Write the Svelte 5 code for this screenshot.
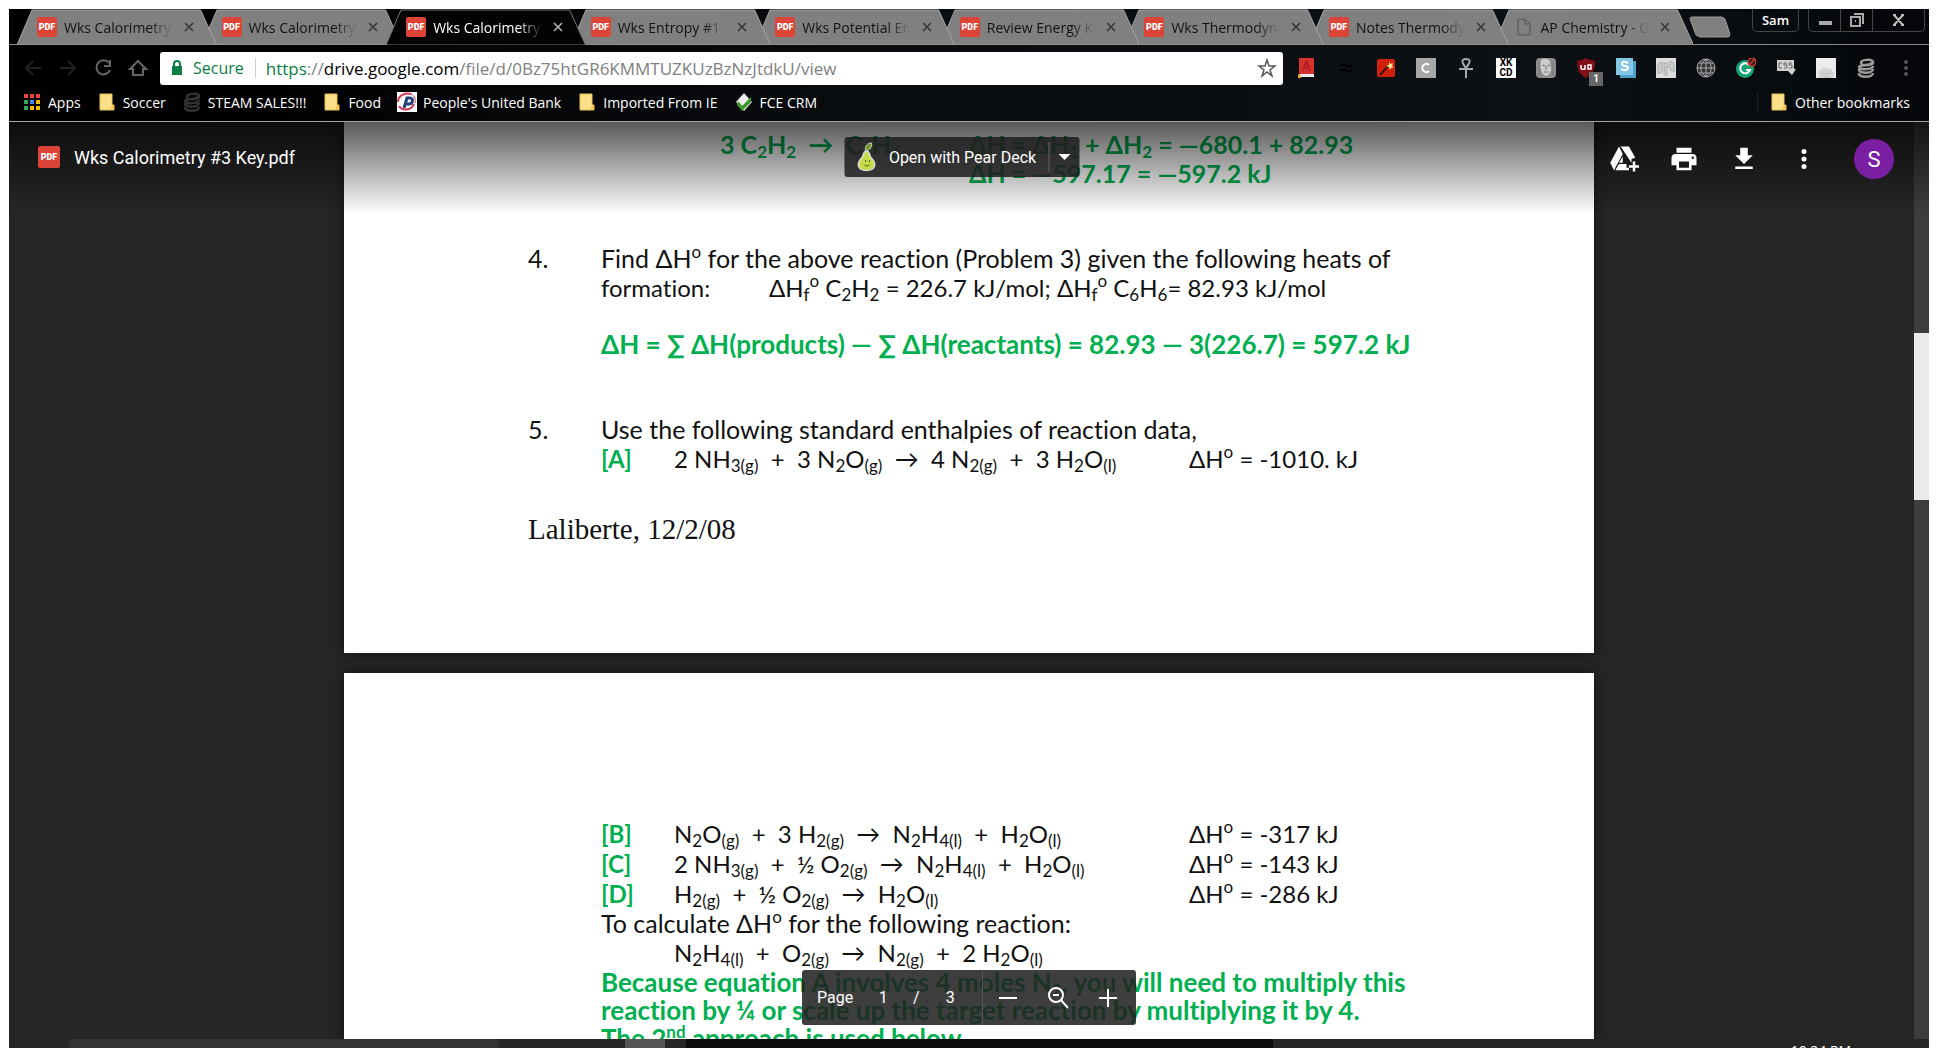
<script>
  const tabs = [
    { title: 'Wks Calorimetry #1', icon: 'pdf' },
    { title: 'Wks Calorimetry #2', icon: 'pdf' },
    { title: 'Wks Calorimetry #3', icon: 'pdf', active: true },
    { title: 'Wks Entropy #1 K', icon: 'pdf' },
    { title: 'Wks Potential Energy', icon: 'pdf' },
    { title: 'Review Energy Key', icon: 'pdf' },
    { title: 'Wks Thermodynamics', icon: 'pdf' },
    { title: 'Notes Thermodynamics', icon: 'pdf' },
    { title: 'AP Chemistry - Goo', icon: 'file' },
  ];

  const bookmarks = [
    { title: 'Apps', icon: 'apps' },
    { title: 'Soccer', icon: 'folder' },
    { title: 'STEAM SALES!!!', icon: 'coil' },
    { title: 'Food', icon: 'folder' },
    { title: "People's United Bank", icon: 'bank' },
    { title: 'Imported From IE', icon: 'folder' },
    { title: 'FCE CRM', icon: 'check' },
  ];

  const extensions = [
    'book', 'wave', 'wand', 'cbox', 'ankh', 'xkcd', 'face', 'shield',
    'sbox', 'panels', 'globe', 'gcheck', 'css', 'bald', 'coilgray',
  ];

  const appColors = ['#f44336', '#f44336', '#f44336', '#34a853', '#4285f4', '#fbbc05', '#34a853', '#fbbc05', '#fbbc05'];

  // "_2" is a subscript, "^o" a superscript; braces group longer ones
  function parse(text) {
    return [...text.matchAll(/([_^])(?:\{([^}]*)\}|(.))|[^_^]+/g)].map((m) => ({
      kind: m[1] === '_' ? 'sub' : m[1] === '^' ? 'sup' : 'text',
      text: m[1] ? m[2] ?? m[3] : m[0],
    }));
  }

  const reactions = [
    { key: '[B]', eq: 'N_2O_{(g)}  +  3 H_{2(g)}  →  N_2H_{4(l)}  +  H_2O_{(l)}', dh: 'ΔH^o = -317 kJ' },
    { key: '[C]', eq: '2 NH_{3(g)}  +  ½ O_{2(g)}  →  N_2H_{4(l)}  +  H_2O_{(l)}', dh: 'ΔH^o = -143 kJ' },
    { key: '[D]', eq: 'H_{2(g)}  +  ½ O_{2(g)}  →  H_2O_{(l)}', dh: 'ΔH^o = -286 kJ' },
  ];

  let url = $state('https://drive.google.com/file/d/0Bz75htGR6KMMTUZKUzBzNzJtdkU/view');
  let page = $state('1');
</script>

{#snippet chem(text)}{#each parse(text) as part}{#if part.kind === 'sub'}<sub>{part.text}</sub>{:else if part.kind === 'sup'}<sup>{part.text}</sup>{:else}{part.text}{/if}{/each}{/snippet}

{#snippet pdf()}
  <span class="pdf">PDF</span>
{/snippet}

{#snippet coil(color)}
  <svg viewBox="0 0 20 20" fill="none" stroke={color} stroke-width="2.5">
    <path d="M16 5c-3 2-11 3-11 0 0-4 11-4 12-1 1 5-14 2-14 5 0 3 14 3 14-1M3 11c-1 5 14 5 14 0M3 15c-1 5 14 5 14 0" />
  </svg>
{/snippet}

{#snippet bookmarkIcon(name)}
  {#if name === 'apps'}
    <svg viewBox="0 0 20 20">
      {#each appColors as color, i}
        <rect x={2 + (i % 3) * 6} y={2 + Math.floor(i / 3) * 6} width="4" height="4" fill={color} />
      {/each}
    </svg>
  {:else if name === 'folder'}
    <svg viewBox="0 0 20 20">
      <path d="M3 2h12v11h2v5H3z" fill="#ffe08a" stroke="#e8bf52" />
      <path d="M15 13l-2 5h4v-5z" fill="#f5c64d" />
    </svg>
  {:else if name === 'coil'}
    {@render coil('#333')}
  {:else if name === 'bank'}
    <svg viewBox="0 0 20 20">
      <rect width="20" height="20" fill="#fff" />
      <path d="M14 2C6 0 1 5 1 10M2 14c3 5 12 5 15-2" fill="none" stroke="#d23b55" stroke-width="2" />
      <path d="M7 16l3-10h3c4 0 3 6-1 6H9" fill="none" stroke="#23417c" stroke-width="3" />
      <path d="M14 2c4 2 5 6 4 9" fill="none" stroke="#d23b55" />
    </svg>
  {:else}
    <svg viewBox="0 0 20 20">
      <path d="M10 1l8 9-8 9-8-9z" fill="#eee" />
      <path d="M4 9l4 5 9-9v5l-9 9-5-6z" fill="#3a9426" />
    </svg>
  {/if}
{/snippet}

{#snippet extensionIcon(name)}
  {#if name === 'book'}
    <svg viewBox="0 0 20 20">
      <path d="M3 0h15v16H3z" fill="#d6322d" />
      <path d="M3 16h15v3H5z" fill="#eee" />
      <path d="M7 13l3-9h1l3 9M8 10h5" fill="none" stroke="#b52020" stroke-width="2" />
      <path d="M2 16l3 2v2H2z" fill="#f2b32a" />
    </svg>
  {:else if name === 'wave'}
    <svg viewBox="0 0 20 20" fill="none" stroke="#000" stroke-width="2">
      <path d="M4 8c4-4 8 3 12-1M4 13c4-4 8 3 12-1" />
    </svg>
  {:else if name === 'wand'}
    <svg viewBox="0 0 20 20">
      <rect x="1" y="1" width="18" height="18" rx="2" fill="#d3200c" />
      <path d="M4 17l8-9" stroke="#401008" stroke-width="2" />
      <path d="M13 3l1 3 3-1-1 3 2 1-3 1-1 2-1-3-3-1 3-1z" fill="#ffe98a" />
    </svg>
  {:else if name === 'cbox'}
    <svg viewBox="0 0 20 20">
      <rect width="20" height="20" fill="#a7a7a7" />
      <path d="M13 7a4 4 0 1 0 0 6" fill="none" stroke="#fff" stroke-width="2" />
    </svg>
  {:else if name === 'ankh'}
    <svg viewBox="0 0 20 20" fill="none" stroke="#aaa" stroke-width="2">
      <path d="M10 20V10M3 11h14M10 10C3 1 8 1 10 1s7 0 0 9z" />
    </svg>
  {:else if name === 'xkcd'}
    <span class="xkcd">XK<br />CD</span>
  {:else if name === 'face'}
    <svg viewBox="0 0 20 20">
      <rect width="20" height="20" rx="4" fill="#8d8d8d" />
      <path d="M5 2q5-3 9 1l1 9q-3 8-7 5-5-5-3-15z" fill="#ccc" />
      <path d="M3 3v14M17 4v13" stroke="#777" />
      <path d="M6 7l3 1M11 8l3-1M8 14h4M10 8v4" stroke="#777" fill="none" />
    </svg>
  {:else if name === 'shield'}
    <svg viewBox="0 0 20 20">
      <path d="M10 0c3 2 6 2 9 3 0 8-2 13-9 17C3 16 1 11 1 3c3-1 6-1 9-3z" fill="#800f18" />
      <path d="M5 7v3q0 2 4 1V7M12 7h3v4h-3z" fill="none" stroke="#fff" stroke-width="1.5" />
    </svg>
    <span class="badge">1</span>
  {:else if name === 'sbox'}
    <svg viewBox="0 0 20 20">
      <path d="M3 3h17v17H4z" fill="#4f9fc9" />
      <rect width="17" height="17" fill="#83c6e6" />
      <path d="M12 5q-6-3-6 1c0 3 6 1 6 4q-1 4-7 1" fill="none" stroke="#fff" stroke-width="2" />
    </svg>
  {:else if name === 'panels'}
    <svg viewBox="0 0 20 20">
      <rect width="20" height="20" fill="#ddd" />
      <path d="M2 6l4-2v10l-4 2zM8 5h4v5H8zM14 3l4 2v9l-4-2zM8 12h3v5H8z" fill="#ccc" stroke="#aaa" />
    </svg>
  {:else if name === 'globe'}
    <svg viewBox="0 0 20 20">
      <circle cx="10" cy="10" r="9" fill="#333" stroke="#aaa" />
      <path d="M10 1v18M1 10h18M3 5h14M3 15h14M10 1c-7 5-7 13 0 18M10 1c7 5 7 13 0 18" fill="none" stroke="#aaa" />
    </svg>
  {:else if name === 'gcheck'}
    <svg viewBox="0 0 20 20">
      <circle cx="9" cy="11" r="9" fill="#14a574" />
      <path d="M13 7a5 5 0 1 0 1 5h-4" fill="none" stroke="#fff" stroke-width="2" />
      <circle cx="16" cy="4" r="4" fill="#222" stroke="#e0352b" stroke-width="1.5" />
      <path d="M13 7l6-6" stroke="#e0352b" stroke-width="1.5" />
    </svg>
  {:else if name === 'css'}
    <svg viewBox="0 0 20 20">
      <path d="M1 2h17v9h2l-4 6-4-4H1z" fill="#d2d2d2" />
      <path d="M6 5H3v5h3M11 5H8v2h3v3H8M16 5h-3v2h3v3h-3" fill="none" stroke="#666" />
    </svg>
  {:else if name === 'bald'}
    <svg viewBox="0 0 20 20">
      <rect width="20" height="20" fill="#ececec" />
      <path d="M3 20c-2-7 1-10 7-10s9 3 7 10z" fill="#d3d3d3" />
      <path d="M5 15l4 1M11 16l4-1M8 19h5" stroke="#bbb" />
    </svg>
  {:else}
    {@render coil('#9a9a9a')}
  {/if}
{/snippet}

<div class="window">
  <header class="chrome">
    <div class="tab-row">
      <div class="tabs">
        {#each tabs as tab, i}
          <div class="tab" class:active={tab.active} style="z-index: {tab.active ? 20 : 10 - i}">
            <svg class="tab-shape" viewBox="0 0 200 36" preserveAspectRatio="none">
              <path d="M0 36L15 1h169l16 35z" />
            </svg>
            {#if tab.icon === 'pdf'}
              {@render pdf()}
            {:else}
              <svg class="file" viewBox="0 0 20 20" fill="none" stroke="#555">
                <path d="M4 2h7l5 5v11H4zM11 2v5h5" />
              </svg>
            {/if}
            <span class="tab-title">{tab.title}</span>
            <button class="tab-close" aria-label="Close tab">
              <svg viewBox="0 0 10 10" fill="none" stroke="currentColor" stroke-width="1.5"><path d="M1 1l8 8M9 1l-8 8" /></svg>
            </button>
          </div>
        {/each}
      </div>
      <button class="new-tab" aria-label="New tab">
        <svg viewBox="0 0 42 22"><path d="M1 3q0-2 2-2h30l3 2 5 15q0 3-2 3H11L7 19z" fill="#808080" stroke="#999" /></svg>
      </button>
      <div class="window-tools">
        <button class="profile">Sam</button>
        <div class="window-buttons">
          <button aria-label="Minimize"><svg viewBox="0 0 16 16"><path d="M2 9h13v4H2z" fill="#aaa" /></svg></button>
          <button aria-label="Restore"><svg viewBox="0 0 16 16" fill="none" stroke="#aaa" stroke-width="2"><path d="M2 5h9v9H2zM5 2h9v10M6 9h1" /></svg></button>
          <button aria-label="Close"><svg viewBox="0 0 16 16" fill="none" stroke="#bbb" stroke-width="2"><path d="M3 3l9 10M12 3L3 13M2 3h3M10 3h3M2 13h3M10 13h3" /></svg></button>
        </div>
      </div>
    </div>

    <div class="toolbar">
      <nav class="nav">
        <button aria-label="Back"><svg viewBox="0 0 20 20" stroke="#222"><path d="M18 10H3M10 3l-7 7 7 7" /></svg></button>
        <button aria-label="Forward"><svg viewBox="0 0 20 20" stroke="#222"><path d="M2 10h15M10 3l7 7-7 7" /></svg></button>
        <button aria-label="Reload"><svg viewBox="0 0 20 20" stroke="#666"><path d="M16 5a7 7 0 1 0 1 7M17 2v6h-6" /></svg></button>
        <button aria-label="Home"><svg viewBox="0 0 20 20" stroke="#666"><path d="M2 11l8-8 8 8h-3v6H5v-6z" /></svg></button>
      </nav>
      <label class="omnibox">
        <svg class="lock" viewBox="0 0 12 16"><path d="M1 6h10v9H1z" fill="#0b8043" /><path d="M3 7V4q0-3 3-3t3 3v3" fill="none" stroke="#0b8043" stroke-width="2" /></svg>
        <span class="secure">Secure</span>
        <span class="url">
          <span class="url-text" aria-hidden="true"><b>https</b>://<i>drive.google.com</i>/file/d/0Bz75htGR6KMMTUZKUzBzNzJtdkU/view</span>
          <input type="text" aria-label="Address" bind:value={url} />
        </span>
        <svg class="star" viewBox="0 0 20 20" fill="none" stroke="#555" stroke-width="1.5"><path d="M10 2l2 6h6l-5 4 2 6-5-4-5 4 2-6-5-4h6z" /></svg>
      </label>
      <div class="extensions">
        {#each extensions as name}
          <button class="extension" aria-label={name}>{@render extensionIcon(name)}</button>
        {/each}
        <button class="extension" aria-label="Menu">
          <svg viewBox="0 0 20 20" fill="#555"><circle cx="10" cy="4" r="2" /><circle cx="10" cy="10" r="2" /><circle cx="10" cy="16" r="2" /></svg>
        </button>
      </div>
    </div>

    <div class="bookmarks">
      {#each bookmarks as mark}
        <a href="#{mark.icon}" class="bookmark">{@render bookmarkIcon(mark.icon)}{mark.title}</a>
      {/each}
      <a href="#other" class="bookmark other">{@render bookmarkIcon('folder')}Other bookmarks</a>
    </div>
  </header>

  <main class="viewer">
    <div class="pages">
      <article class="sheet first">
        <div class="top-line green">
          <span>{@render chem('3 C_2H_2  →  C_6H_6')}</span>
          <span>{@render chem('ΔH = ΔH_1 + ΔH_2 = —680.1 + 82.93')}<br />ΔH = —597.17 = —597.2 kJ</span>
        </div>
        <section class="problem">
          <span>4.</span>
          <div>
            <p>{@render chem('Find ΔH^o for the above reaction (Problem 3) given the following heats of')}</p>
            <p class="given"><span>formation:</span><span>{@render chem('ΔH_f^o C_2H_2 = 226.7 kJ/mol; ΔH_f^o C_6H_6= 82.93 kJ/mol')}</span></p>
            <p class="answer green">ΔH = ∑ ΔH(products) — ∑ ΔH(reactants) = 82.93 — 3(226.7) = 597.2 kJ</p>
          </div>
        </section>
        <section class="problem">
          <span>5.</span>
          <div>
            <p>Use the following standard enthalpies of reaction data,</p>
            <p class="reaction">
              <span class="green">[A]</span>
              <span>{@render chem('2 NH_{3(g)}  +  3 N_2O_{(g)}  →  4 N_{2(g)}  +  3 H_2O_{(l)}')}</span>
              <span>{@render chem('ΔH^o = -1010. kJ')}</span>
            </p>
          </div>
        </section>
        <footer class="author">Laliberte, 12/2/08</footer>
      </article>

      <article class="sheet second">
        {#each reactions as r}
          <p class="reaction tall">
            <span class="green">{r.key}</span>
            <span>{@render chem(r.eq)}</span>
            <span>{@render chem(r.dh)}</span>
          </p>
        {/each}
        <p>{@render chem('To calculate ΔH^o for the following reaction:')}</p>
        <p class="reaction tall">
          <span></span>
          <span>{@render chem('N_2H_{4(l)}  +  O_{2(g)}  →  N_{2(g)}  +  2 H_2O_{(l)}')}</span>
        </p>
        <div class="note green">
          <p>{@render chem('Because equation A involves 4 moles N_2, you will need to multiply this')}</p>
          <p>reaction by ¼ or scale up the target reaction by multiplying it by 4.</p>
          <p>{@render chem('The 2^{nd} approach is used below.')}</p>
        </div>
      </article>
    </div>

    <div class="scrollbar"><div class="thumb"></div></div>

    <div class="viewer-bar">
      <div class="doc-name">{@render pdf()}<span>Wks Calorimetry #3 Key.pdf</span></div>
      <div class="actions">
        <button aria-label="Add to My Drive">
          <svg viewBox="0 0 24 24"><path d="M8 2L1 15l3 6 7-13zM9 2h7l5 9-3 1v3L10 3zM11 10l-3 5h3zM8 16h6v3h2v2H5z" /><path d="M19 14h2v3h3v2h-3v3h-2v-3h-3v-2h3z" /></svg>
        </button>
        <button aria-label="Print">
          <svg viewBox="0 0 24 24"><path d="M19 8H5c-1.700 0-3 1.300-3 3v6h4v4h12v-4h4v-6c0-1.700-1.300-3-3-3zm-3 11H8v-5h8v5zm3-7a1 1 0 1 1 0-2 1 1 0 0 1 0 2zM18 3H6v4h12z" /></svg>
        </button>
        <button aria-label="Download">
          <svg viewBox="0 0 24 24"><path d="M19 9h-4V3H9v6H5l7 7zM5 18v2h14v-2z" /></svg>
        </button>
        <button aria-label="More actions">
          <svg viewBox="0 0 24 24"><circle cx="12" cy="6" r="2" /><circle cx="12" cy="12" r="2" /><circle cx="12" cy="18" r="2" /></svg>
        </button>
        <button class="avatar">S</button>
      </div>
    </div>

    <div class="open-with">
      <button class="open-main">
        <svg viewBox="0 0 20 30">
          <path d="M10 9c3 0 3 3 4 6 3 3 5 6 4 9-1 6-15 6-16 0-1-3 1-6 4-9 1-3 1-6 4-6z" fill="#c5d94a" stroke="#ddd" stroke-width="1.500" />
          <path d="M9 9c-1-5 2-8 6-8 1 5-2 7-6 8z" fill="#6f9a2c" stroke="#ccc" />
          <path d="M9 18v2M13 18v2M8 23q3 2 5 0" stroke="#556b1c" fill="none" />
        </svg>
        Open with Pear Deck
      </button>
      <button class="open-more" aria-label="More apps">
        <svg viewBox="0 0 12 6"><path d="M0 0h12L6 6z" fill="#fff" /></svg>
      </button>
    </div>

    <div class="pager">
      <label class="page-label">Page <input type="text" bind:value={page} /></label>
      <span>/</span>
      <span class="total">3</span>
      <div class="zoom">
        <button aria-label="Zoom out"><svg viewBox="0 0 24 24"><path d="M3 11h18v2H3z" fill="#fff" /></svg></button>
        <button aria-label="Fit to width"><svg viewBox="0 0 24 24" fill="none" stroke="#fff" stroke-width="2"><circle cx="10" cy="9" r="7" /><path d="M15 14l7 8M7 9h6" /></svg></button>
        <button aria-label="Zoom in"><svg viewBox="0 0 24 24"><path d="M11 3h2v8h8v2h-8v8h-2v-8H3v-2h8z" fill="#fff" /></svg></button>
      </div>
    </div>
  </main>

  <footer class="taskbar">
    <div class="search"></div>
    <div class="running"></div>
    <div class="wallpaper"></div>
    <span class="clock">10:24 PM</span>
  </footer>
</div>

<style>
  :global(body) {
    background: #fff;
  }

  :global(#app) {
    height: 100vh;
    overflow: hidden;
  }

  * {
    box-sizing: border-box;
  }

  button {
    display: flex;
    align-items: center;
    justify-content: center;
    padding: 0;
    border: 0;
    background: none;
    color: inherit;
    font: inherit;
  }

  p {
    margin: 0;
  }

  .window {
    display: flex;
    flex-direction: column;
    height: 100vh;
    padding: 9px 9px 0;
    font-family: "Open Sans", "Noto Sans", sans-serif;
    font-size: 14px;
  }

  /* browser chrome */
  .chrome {
    flex: none;
    background: linear-gradient(90deg, #000 10%, #090c10 45%, #0c1116 80%, #05070a);
    border-bottom: 1px solid #a5a5a5;
    color: #fff;
  }

  .tab-row {
    display: flex;
    height: 36px;
    border-bottom: 1px solid #8b8b8b;
    padding-left: 8px;
  }

  .tabs {
    display: flex;
    flex: 0 1 1661px;
    min-width: 0;
  }

  .tab {
    position: relative;
    display: flex;
    align-items: center;
    flex: 1 1 0;
    min-width: 0;
    height: 36px;
    margin-right: -15px;
    padding: 0 18px 0 20px;
    color: #111;
  }

  .tab-shape {
    position: absolute;
    inset: 0;
    width: 100%;
    height: 100%;
    fill: #808080;
    stroke: #a5a5a5;
  }

  .tab.active {
    color: #fff;
  }

  .tab.active .tab-shape {
    fill: #020304;
    stroke: #777;
  }

  .pdf {
    position: relative;
    display: flex;
    flex: none;
    align-items: center;
    justify-content: center;
    width: 20px;
    height: 20px;
    border-radius: 2px;
    background: #db4437;
    color: #fff;
    font: 900 9px Roboto, sans-serif;
  }

  .file {
    position: relative;
    flex: none;
    width: 20px;
    height: 20px;
  }

  .tab-title {
    position: relative;
    flex: 1;
    min-width: 0;
    margin-left: 7px;
    overflow: hidden;
    white-space: nowrap;
    mask-image: linear-gradient(90deg, #000 78%, transparent);
  }

  .tab-close {
    position: relative;
    width: 20px;
    height: 20px;
    margin-left: 6px;
    color: #333;
  }

  .active .tab-close {
    color: #bbb;
  }

  .tab-close svg {
    width: 10px;
    height: 10px;
  }

  .new-tab {
    flex: none;
    align-self: center;
    width: 42px;
    margin-left: 11px;
  }

  .new-tab svg {
    width: 42px;
    height: 22px;
  }

  .window-tools {
    display: flex;
    gap: 9px;
    height: 23px;
    margin-left: auto;
    padding-right: 4px;
  }

  .profile,
  .window-buttons {
    border: 1px solid #444;
    border-top: 0;
    border-radius: 0 0 5px 5px;
  }

  .profile {
    width: 47px;
    font-size: 13px;
    font-weight: 600;
  }

  .window-buttons {
    display: flex;
  }

  .window-buttons button {
    width: 32px;
    border-right: 1px solid #444;
  }

  .window-buttons button:last-child {
    width: 51px;
    border-right: 0;
  }

  .window-buttons svg {
    width: 16px;
    height: 16px;
  }

  .toolbar {
    display: flex;
    align-items: center;
    height: 46px;
    padding: 0 3px 0 6px;
  }

  .nav {
    display: flex;
    flex: none;
  }

  .nav button {
    width: 35px;
    height: 34px;
  }

  .nav svg {
    width: 20px;
    height: 20px;
    fill: none;
    stroke-width: 2;
  }

  .omnibox {
    display: flex;
    flex: 1;
    align-items: center;
    min-width: 0;
    height: 33px;
    margin-left: 5px;
    padding: 0 6px 0 11px;
    border-radius: 3px;
    background: #fff;
    color: #808080;
    font-size: 16px;
  }

  .lock {
    width: 12px;
    height: 16px;
  }

  .secure {
    margin-left: 10px;
    padding-right: 11px;
    border-right: 1px solid #ccc;
    color: #0b8043;
    line-height: 20px;
  }

  .url {
    position: relative;
    flex: 1;
    min-width: 0;
    margin-left: 10px;
    font-size: 17px;
    white-space: nowrap;
  }

  .url b {
    color: #0b8043;
    font-weight: 400;
  }

  .url i {
    color: #000;
    font-style: normal;
  }

  /* the coloured text lies under a clear input */
  .url input {
    position: absolute;
    inset: 0;
    width: 100%;
    padding: 0;
    border: 0;
    background: none;
    color: transparent;
    font: inherit;
  }

  .star {
    width: 20px;
    height: 20px;
  }

  .extensions {
    display: flex;
    flex: none;
    margin-left: 3px;
  }

  .extension {
    position: relative;
    width: 40px;
    height: 34px;
  }

  .extension svg {
    width: 20px;
    height: 20px;
  }

  .xkcd {
    width: 20px;
    height: 20px;
    background: #fff;
    color: #000;
    font: 700 10px/10px Roboto, sans-serif;
  }

  .badge {
    position: absolute;
    right: 3px;
    bottom: -1px;
    width: 14px;
    height: 14px;
    background: #666;
    font: 700 10px/14px Roboto, sans-serif;
  }

  .bookmarks {
    display: flex;
    align-items: center;
    gap: 16px;
    height: 30px;
    padding: 0 19px 8px 13px;
  }

  .bookmark {
    display: flex;
    align-items: center;
    gap: 6px;
    color: #fff;
    text-decoration: none;
    white-space: nowrap;
  }

  .bookmark svg {
    width: 20px;
    height: 20px;
  }

  .other {
    margin-left: auto;
    padding-left: 11px;
    border-left: 1px solid #222;
  }

  /* document */
  .viewer {
    position: relative;
    display: flex;
    flex: 1;
    min-height: 0;
    overflow: hidden;
    background: #262626;
  }

  .pages {
    display: flex;
    flex: 1;
    flex-direction: column;
    align-items: center;
    gap: 20px;
    overflow: hidden;
  }

  .sheet {
    flex: none;
    width: 1250px;
    max-width: 100%;
    margin-left: 15px;
    background: #fff;
    box-shadow: 0 0 12px #111;
    color: #111;
    font-family: Lato, "Noto Sans", sans-serif;
    font-size: 25px;
    font-variant-ligatures: none;
    line-height: 29px;
  }

  .first {
    display: flex;
    flex-direction: column;
    padding: 8px 184px 109px;
  }

  .second {
    padding: 146px 100px 60px 257px;
  }

  .sheet sub,
  .sheet sup {
    font-size: 17px;
    line-height: 0;
  }

  .sheet sub {
    vertical-align: -4px;
  }

  .sheet sup {
    vertical-align: 10px;
  }

  .green {
    color: #00b050;
    font-weight: 700;
  }

  .top-line {
    display: grid;
    grid-template-columns: 249px 1fr;
    padding-left: 192px;
    white-space: pre;
  }

  .problem {
    display: grid;
    grid-template-columns: 73px 1fr;
    margin-top: 56px;
    white-space: nowrap;
  }

  .given {
    display: grid;
    grid-template-columns: 168px 1fr;
    font-size: 24px;
  }

  .answer {
    margin-top: 28px;
  }

  .answer,
  .note {
    font-size: 26px;
  }

  .note {
    line-height: 28px;
    white-space: nowrap;
  }

  .reaction {
    display: grid;
    grid-template-columns: 73px 515px 1fr;
    font-size: 24px;
    white-space: pre;
  }

  .tall {
    line-height: 30px;
  }

  .author {
    margin-top: 42px;
    font-family: "Liberation Serif", serif;
    font-size: 29px;
  }

  .scrollbar {
    flex: none;
    width: 15px;
    padding-top: 211px;
    background: #3d3d3d;
  }

  .thumb {
    height: 167px;
    background: #eaeaea;
  }

  .viewer-bar {
    position: absolute;
    inset: 0 0 auto;
    display: flex;
    justify-content: space-between;
    height: 92px;
    padding: 17px 35px 0 29px;
    background: linear-gradient(rgba(0, 0, 0, 0.65), transparent);
    color: #fff;
    font-family: Roboto, sans-serif;
    font-size: 18px;
  }

  .doc-name,
  .actions {
    display: flex;
    align-items: center;
    height: 40px;
  }

  .doc-name {
    gap: 14px;
    height: 36px;
  }

  .doc-name .pdf {
    width: 22px;
    height: 22px;
  }

  .actions button {
    width: 60px;
    height: 40px;
  }

  .actions svg {
    width: 30px;
    height: 30px;
    fill: #fff;
  }

  .actions .avatar {
    width: 40px;
    margin-left: 20px;
    border-radius: 50%;
    background: #7b1fa2;
    font-size: 22px;
  }

  .open-with,
  .pager {
    position: absolute;
    left: 50%;
    display: flex;
    align-items: center;
    transform: translateX(-50%);
    border-radius: 3px;
    color: #fff;
    font-family: Roboto, sans-serif;
    font-size: 16px;
    white-space: nowrap;
  }

  .open-with {
    top: 15px;
    width: 235px;
    height: 40px;
    margin-left: -7px;
    background: rgba(30, 30, 30, 0.86);
  }

  .open-main {
    flex: 1;
    gap: 12px;
    height: 30px;
    border-right: 1px solid #666;
  }

  .open-main svg {
    width: 20px;
    height: 30px;
  }

  .open-more {
    width: 30px;
  }

  .open-more svg {
    width: 12px;
    height: 6px;
  }

  .pager {
    bottom: 14px;
    width: 334px;
    height: 55px;
    padding-left: 15px;
    background: rgba(30, 30, 30, 0.86);
  }

  .page-label {
    display: flex;
    align-items: center;
    gap: 14px;
  }

  .page-label input {
    width: 32px;
    padding: 0;
    border: 0;
    background: none;
    color: #fff;
    font: inherit;
    text-align: center;
  }

  .pager > span {
    width: 34px;
    text-align: center;
  }

  .zoom {
    display: flex;
    flex: none;
    align-items: center;
    width: 154px;
    height: 55px;
    margin-left: auto;
    border-left: 1px solid #555;
  }

  .zoom button {
    width: 50px;
    height: 50px;
  }

  .zoom svg {
    width: 24px;
    height: 24px;
  }

  /* desktop taskbar */
  .taskbar {
    display: flex;
    flex: none;
    height: 9px;
    overflow: hidden;
    padding-left: 60px;
    background: #262626;
    color: #fff;
  }

  .search {
    width: 430px;
    background: #333;
  }

  .running {
    width: 40px;
    margin-left: 126px;
    background: #555;
  }

  .wallpaper {
    width: 587px;
    margin-left: 21px;
    background: #0c0a0a;
  }

  .clock {
    margin-left: auto;
    padding: 4px 78px 0 0;
    font-size: 14px;
    line-height: 16px;
  }
</style>
